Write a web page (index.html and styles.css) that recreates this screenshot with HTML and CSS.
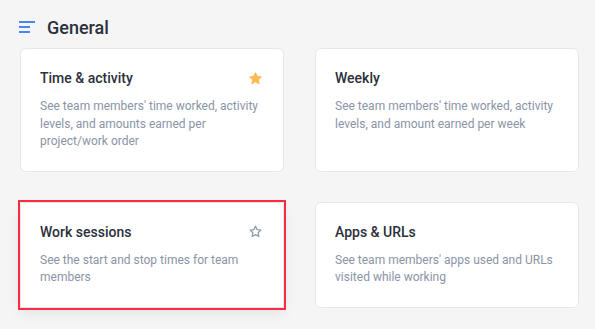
FILE: index.html
```html
<!DOCTYPE html>
<html>
<head>
<meta charset="utf-8">
<link rel="stylesheet" href="styles.css">
</head>
<body>
<div class="page">
  <div class="section-head">
    <svg class="menu-icon" width="16" height="12" viewBox="0 0 16 12">
      <rect x="0" y="0" width="16" height="2" fill="#4a86f7"/>
      <rect x="0" y="5" width="11" height="2" fill="#4a86f7"/>
      <rect x="0" y="10" width="11" height="2" fill="#4a86f7"/>
    </svg>
    <h2 class="section-title">General</h2>
  </div>
  <div class="grid">
    <div class="card">
      <div class="card-head">
        <span class="card-title">Time &amp; activity</span>
        <svg class="star" width="15" height="15" viewBox="0 0 24 24"><path d="M12 2.5l2.9 6.1 6.6.8-4.9 4.6 1.3 6.6L12 17.3l-5.9 3.3 1.3-6.6-4.9-4.6 6.6-.8z" fill="#fdbb4f" stroke="#fdbb4f" stroke-width="1.5" stroke-linejoin="round"/></svg>
      </div>
      <p class="card-desc">See team members' time worked, activity levels, and amounts earned per project/work order</p>
    </div>
    <div class="card">
      <div class="card-head">
        <span class="card-title">Weekly</span>
      </div>
      <p class="card-desc">See team members' time worked, activity levels, and amount earned per week</p>
    </div>
    <div class="card card-selected">
      <div class="card-head">
        <span class="card-title">Work sessions</span>
        <svg class="star" width="15" height="15" viewBox="0 0 24 24"><path d="M12 3.5l2.6 5.5 6 .7-4.4 4.2 1.2 6L12 17l-5.4 2.9 1.2-6-4.4-4.2 6-.7z" fill="none" stroke="#8d98ab" stroke-width="2" stroke-linejoin="round"/></svg>
      </div>
      <p class="card-desc">See the start and stop times for team members</p>
    </div>
    <div class="card">
      <div class="card-head">
        <span class="card-title">Apps &amp; URLs</span>
      </div>
      <p class="card-desc">See team members' apps used and URLs visited while working</p>
    </div>
  </div>
</div>
</body>
</html>
```

FILE: styles.css
```css
* { box-sizing: border-box; }
html, body {
  margin: 0;
  background: #f5f5f6;
  font-family: Roboto, "Liberation Sans", sans-serif;
}
.page {
  padding: 15px 17px 24px 20px;
}
.section-head {
  display: flex;
  align-items: center;
  height: 24px;
  margin-left: -1px;
}
.menu-icon {
  margin-right: 12px;
  flex: none;
}
.section-title {
  margin: 0;
  font-size: 18px;
  font-weight: 500;
  color: #2b313d;
}
.grid {
  margin-top: 9px;
  display: grid;
  grid-template-columns: 264px 264px;
  column-gap: 31px;
  row-gap: 30px;
}
.card {
  background: #fff;
  border: 1px solid #e4e7ec;
  border-radius: 6px;
  padding: 19px 19px 20px 19px;
}
.card-selected {
  border-radius: 0;
  outline: 2px solid #ff2a3e;
  box-shadow: 0 6px 12px rgba(0, 0, 0, 0.07);
}
.card-head {
  display: flex;
  justify-content: space-between;
  align-items: center;
  height: 20px;
}
.card-title {
  font-size: 14px;
  font-weight: 500;
  color: #2b303b;
}
.star {
  display: block;
  margin-right: 1px;
}
.card-desc {
  margin: 10px 0 0;
  font-size: 12px;
  line-height: 17.5px;
  color: #8a94a6;
}
```
